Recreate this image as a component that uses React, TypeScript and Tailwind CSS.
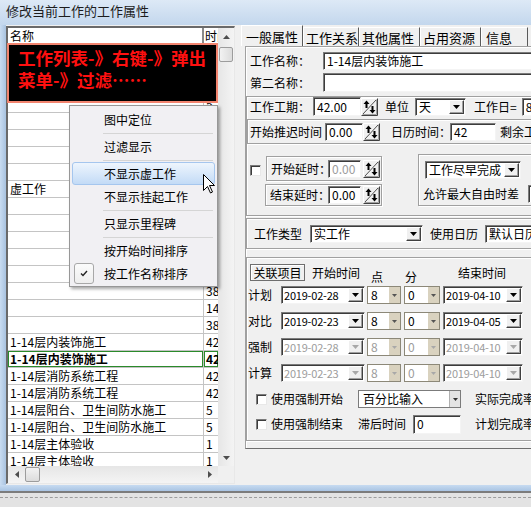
import React from "react";

type Kids = { children?: React.ReactNode; className?: string };

function L({ children, className = "" }: Kids) {
  return <span className={`shrink-0 whitespace-nowrap ${className}`}>{children}</span>;
}

function Field({ children, className = "", grey }: Kids & { grey?: boolean }) {
  return (
    <div
      className={`flex items-center shrink-0 bg-white border border-t-[#7b7b7b] border-l-[#7b7b7b] border-r-[#f4f4f4] border-b-[#f4f4f4] shadow-[inset_1px_1px_0_#3c3c3c] pl-[3px] text-[12px] leading-[14px] overflow-hidden whitespace-nowrap ${grey ? "text-[#9c9c9c]" : "text-black"} ${className}`}
    >
      {children}
    </div>
  );
}

function DropBtn({ grey }: { grey?: boolean }) {
  return (
    <div className="w-[15px] shrink-0 my-[1px] mr-[1px] flex items-center justify-center bg-[#f0f0f0] border border-t-white border-l-white border-r-[#404040] border-b-[#404040] shadow-[inset_-1px_-1px_0_#a0a0a0]">
      <svg width="7" height="4" viewBox="0 0 7 4">
        <path d="M0 0H7L3.5 4Z" fill={grey ? "#a8a8a8" : "#000"} />
      </svg>
    </div>
  );
}

function Combo({
  text,
  className = "",
  grey,
  small,
}: {
  text: string;
  className?: string;
  grey?: boolean;
  small?: boolean;
}) {
  return (
    <div
      className={`flex shrink-0 bg-white border border-t-[#7b7b7b] border-l-[#7b7b7b] border-r-[#f4f4f4] border-b-[#f4f4f4] shadow-[inset_1px_1px_0_#3c3c3c] ${className}`}
    >
      <div
        className={`flex-1 min-w-0 flex items-center whitespace-nowrap overflow-hidden ${small ? "pl-[2px] text-[11px] leading-[13px] tracking-[-0.2px]" : "pl-[3px] text-[12px] leading-[14px]"} ${grey ? "text-[#9c9c9c]" : "text-black"}`}
      >
        {text}
      </div>
      <DropBtn grey={grey} />
    </div>
  );
}

function TanCombo({ text, className = "", grey }: { text: string; className?: string; grey?: boolean }) {
  return (
    <div className={`flex h-[18px] shrink-0 bg-white border border-[#8c8878] ${className}`}>
      <div
        className={`flex-1 flex items-center pl-[3px] text-[12px] leading-[14px] ${grey ? "text-[#9c9c9c]" : "text-black"}`}
      >
        {text}
      </div>
      <div className="w-[11px] bg-[#d9d2bf] flex items-center justify-center">
        <svg width="5" height="3" viewBox="0 0 5 3">
          <path d="M0 0H5L2.5 3Z" fill={grey ? "#a8a8a8" : "#555"} />
        </svg>
      </div>
    </div>
  );
}

function Spin() {
  return (
    <svg width="17" height="18" viewBox="0 0 17 18" className="shrink-0">
      <rect x="0" y="0" width="17" height="18" fill="#f0f0f0" />
      <path d="M0.5 17.5V0.5H16.5" stroke="#fff" fill="none" />
      <path d="M0.5 17.5H16.5V0.5" stroke="#404040" fill="none" />
      <path d="M1.5 16.5H15.5V1.5" stroke="#a0a0a0" fill="none" />
      <path d="M2 16L15 2" stroke="#505050" />
      <path d="M5.5 4V10" stroke="#000" strokeWidth="2" />
      <path d="M2.5 6L5.5 2.5L8.5 6Z" fill="#000" />
      <path d="M11.5 8V13" stroke="#000" strokeWidth="2" />
      <path d="M8.5 12L11.5 15.5L14.5 12Z" fill="#000" />
    </svg>
  );
}

function Check({ className = "" }: { className?: string }) {
  return (
    <div
      className={`w-[11px] h-[11px] shrink-0 bg-white border border-t-[#7b7b7b] border-l-[#7b7b7b] border-r-[#e8e8e8] border-b-[#e8e8e8] shadow-[inset_1px_1px_0_#3c3c3c] ${className}`}
    />
  );
}

function Group({ children, className = "" }: Kids) {
  return (
    <div className={`shrink-0 border border-[#a0a0a0] shadow-[inset_1px_1px_0_#fff,1px_1px_0_#fff] ${className}`}>
      {children}
    </div>
  );
}

const rows: { name: string; time: string; bold?: boolean }[] = [
  { name: "", time: "42" },
  { name: "", time: "42" },
  { name: "", time: "5" },
  { name: "", time: "5" },
  { name: "", time: "" },
  { name: "", time: "" },
  { name: "", time: "" },
  { name: "", time: "" },
  { name: "虚工作", time: "" },
  { name: "", time: "" },
  { name: "", time: "" },
  { name: "", time: "" },
  { name: "", time: "" },
  { name: "", time: "" },
  { name: "", time: "38" },
  { name: "", time: "14" },
  { name: "", time: "38" },
  { name: "1-14层内装饰施工", time: "42" },
  { name: "1-14层内装饰施工", time: "42", bold: true },
  { name: "1-14层消防系统工程", time: "42" },
  { name: "1-14层消防系统工程", time: "42" },
  { name: "1-14层阳台、卫生间防水施工", time: "5" },
  { name: "1-14层阳台、卫生间防水施工", time: "5" },
  { name: "1-14层主体验收", time: "1" },
  { name: "1-14层主体验收", time: "1" },
];

function Arrow({ dir }: { dir: "up" | "down" | "left" | "right" }) {
  const d = {
    up: "M0 4L3.5 0L7 4Z",
    down: "M0 0H7L3.5 4Z",
    left: "M4 0V7L0 3.5Z",
    right: "M0 0V7L4 3.5Z",
  }[dir];
  const horiz = dir === "left" || dir === "right";
  return (
    <svg width={horiz ? 4 : 7} height={horiz ? 7 : 4} viewBox={horiz ? "0 0 4 7" : "0 0 7 4"}>
      <path d={d} fill="#4d4d4d" />
    </svg>
  );
}

function LeftList() {
  return (
    <div className="w-[229px] mt-[1px] h-[458px] shrink-0 flex flex-col bg-white border-l-2 border-t-2 border-r border-b border-l-[#6a6a6a] border-t-[#6a6a6a] border-r-[#e8e8e8] border-b-[#e8e8e8]">
      <div className="flex h-[438px]">
        <div className="w-[210px] overflow-hidden flex flex-col">
          <div className="flex h-[17px] shrink-0 border-b border-[#9a9a9a] text-[12px] leading-[16px]">
            <div className="w-[196px] shrink-0 border-r-2 border-[#8a8a8a] pl-[2px]">名称</div>
            <div className="flex-1 pl-[1px] overflow-hidden whitespace-nowrap">时间</div>
          </div>
          {rows.map((r, i) => (
            <div key={i} className="flex h-[17px] shrink-0 border-b border-[#c4c4c4] text-[12px] leading-[16px]">
              <div
                className={`w-[196px] shrink-0 border-r border-[#c4c4c4] pl-[2px] overflow-hidden whitespace-nowrap ${r.bold ? "font-bold shadow-[inset_0_0_0_1px_#2a8a2a]" : ""}`}
              >
                {r.name}
              </div>
              <div
                className={`flex-1 pl-[2px] overflow-hidden whitespace-nowrap ${r.bold ? "font-bold shadow-[inset_0_0_0_1px_#2a8a2a]" : ""}`}
              >
                {r.time}
              </div>
            </div>
          ))}
        </div>
        <div className="w-[16px] flex flex-col bg-gradient-to-r from-[#e6e6e6] to-[#f4f4f4]">
          <div className="h-[17px] flex items-center justify-center">
            <Arrow dir="up" />
          </div>
          <div className="h-[15px] mt-[2px] mx-[1px] rounded-[2px] border border-[#9c9c9c] bg-gradient-to-r from-[#f2f2f2] to-[#dcdcdc]" />
          <div className="flex-1" />
          <div className="h-[17px] flex items-center justify-center">
            <Arrow dir="down" />
          </div>
        </div>
      </div>
      <div className="flex h-[17px]">
        <div className="w-[210px] flex items-center bg-gradient-to-b from-[#e6e6e6] to-[#f4f4f4]">
          <div className="w-[17px] flex justify-center">
            <Arrow dir="left" />
          </div>
          <div className="w-[15px] h-[15px] rounded-[2px] border border-[#9c9c9c] bg-gradient-to-b from-[#f2f2f2] to-[#dcdcdc]" />
          <div className="flex-1" />
          <div className="w-[17px] flex justify-center">
            <Arrow dir="right" />
          </div>
        </div>
        <div className="flex-1 bg-[#f0f0f0]" />
      </div>
    </div>
  );
}

const tabs: [string, string][] = [
  ["一般属性", "w-[62px] pl-[4px]"],
  ["工作关系", "w-[56px] pl-[2px]"],
  ["其他属性", "w-[61px] pl-[2px]"],
  ["占用资源", "w-[61px] pl-[2px]"],
  ["信息", "w-[47px] pl-[4px]"],
];

function RightPanel() {
  return (
    <div className="w-[290px] shrink-0 flex flex-col whitespace-nowrap">
      <div className="flex h-[21px] items-end">
        {tabs.map(([t, w], i) => (
          <div
            key={t}
            className={`${w} shrink-0 flex items-center text-[13px] leading-[15px] border-l border-l-white border-t border-t-white border-r border-r-[#5a5a5a] ${i === 0 ? "h-[21px]" : "h-[19px]"}`}
          >
            {t}
          </div>
        ))}
      </div>
      <div className="ml-[4px] w-[300px] h-[403px] shrink-0 flex flex-col border-t border-l border-t-[#a0a0a0] border-l-[#a0a0a0] border-b border-b-[#6e6e6e] shadow-[inset_1px_1px_0_#fff] text-[12px] leading-[14px]">
        {/* names */}
        <div className="flex items-center mt-[5px] h-[18px]">
          <L className="w-[77px] pl-[4px]">工作名称：</L>
          <Field className="flex-1 h-[18px]">1-14层内装饰施工</Field>
        </div>
        <div className="flex items-center mt-[3px] h-[19px]">
          <L className="w-[77px] pl-[4px]">第二名称：</L>
          <Field className="flex-1 h-[19px]" />
        </div>

        {/* duration group */}
        <Group className="mt-[4px] h-[120px] flex flex-col">
          <div className="flex items-center h-[19px]">
            <L className="w-[66px] pl-[3px]">工作工期：</L>
            <Field className="w-[48px] h-[19px]">42.00</Field>
            <Spin />
            <L className="ml-[7px]">单位</L>
            <Combo text="天" className="ml-[6px] w-[51px] h-[18px]" />
            <L className="ml-[8px]">工作日=</L>
            <Field className="ml-[5px] w-[30px] h-[18px]">8</Field>
          </div>
          <Group className="mt-[3px] h-[25px] flex items-center">
            <L className="w-[77px] pl-[2px]">开始推迟时间</L>
            <Field className="w-[38px] h-[18px]">0.00</Field>
            <Spin />
            <L className="ml-[11px] w-[59px]">日历时间：</L>
            <Field className="w-[46px] h-[18px] text-[11px]">42</Field>
            <L className="ml-[4px]">剩余工作</L>
          </Group>
          <div className="flex items-start flex-1">
            <Check className="ml-[3px] mt-[21px]" />
            <div className="ml-[5px] mt-[12px] flex flex-col shrink-0">
              <Group className="w-[116px] h-[25px] flex items-center">
                <L className="w-[61px] pl-[4px]">开始延时：</L>
                <Field grey className="w-[33px] h-[18px]">0.00</Field>
                <span className="w-[2px] shrink-0" />
                <Spin />
              </Group>
              <Group className="mt-[3px] -ml-[1px] w-[117px] h-[22px] flex items-center">
                <L className="w-[62px] pl-[4px]">结束延时：</L>
                <Field className="w-[33px] h-[18px]">0.00</Field>
                <span className="w-[2px] shrink-0" />
                <Spin />
              </Group>
            </div>
            <Group className="ml-[36px] mt-[10px] h-[52px] w-[130px] flex flex-col">
              <Combo text="工作尽早完成" className="ml-[6px] mt-[6px] w-[96px] h-[18px]" />
              <div className="flex items-center mt-[6px]">
                <L className="ml-[4px]">允许最大自由时差</L>
                <Field className="ml-[9px] w-[30px] h-[18px]" />
              </div>
            </Group>
          </div>
        </Group>

        {/* type group */}
        <Group className="mt-[2px] h-[31px] flex items-center">
          <L className="w-[63px] pl-[7px]">工作类型</L>
          <Combo text="实工作" className="w-[113px] h-[18px]" />
          <L className="ml-[7px]">使用日历</L>
          <Combo text="默认日历" className="ml-[7px] w-[70px] h-[18px]" />
        </Group>

        {/* time group */}
        <Group className="mt-[8px] h-[184px] flex flex-col">
          <div className="flex items-start mt-[6px] h-[17px]">
            <div className="ml-[3px] w-[55px] h-[17px] shrink-0 flex items-center justify-center border border-[#6e6e6e] shadow-[inset_1px_1px_0_#fff]">
              关联项目
            </div>
            <L className="ml-[7px] mt-[2px]">开始时间</L>
            <L className="ml-[11px] mt-[6px]">点</L>
            <L className="ml-[22px] mt-[6px]">分</L>
            <L className="ml-[41px] mt-[2px]">结束时间</L>
          </div>
          {[
            ["计划", "2019-02-28", "2019-04-10", false, "mt-[5px]"],
            ["对比", "2019-02-23", "2019-04-05", false, "mt-[8px]"],
            ["强制", "2019-02-28", "2019-04-10", true, "mt-[8px]"],
            ["计算", "2019-02-23", "2019-04-10", true, "mt-[8px]"],
          ].map(([label, s, e, g, mt]) => (
            <div key={label as string} className={`flex items-center h-[18px] ${mt}`}>
              <L className="w-[34px] pl-[1px]">{label}</L>
              <Combo small text={s as string} grey={g as boolean} className="w-[84px] h-[18px]" />
              <TanCombo text="8" grey={g as boolean} className="ml-[2px] w-[34px]" />
              <TanCombo text="0" grey={g as boolean} className="ml-[3px] w-[36px]" />
              <Combo small text={e as string} grey={g as boolean} className="ml-[3px] w-[80px] h-[18px]" />
            </div>
          ))}
          <div className="flex items-center h-[18px] mt-[8px]">
            <Check className="ml-[9px]" />
            <L className="ml-[4px] w-[87px]">使用强制开始</L>
            <div className="flex w-[103px] h-[18px] shrink-0 bg-white border border-[#7b7b7b]">
              <div className="flex-1 flex items-center pl-[4px]">百分比输入</div>
              <div className="w-[11px] bg-[#e4e4e4] border-l border-[#b0b0b0] flex items-center justify-center">
                <svg width="5" height="3" viewBox="0 0 5 3">
                  <path d="M0 0H5L2.5 3Z" fill="#333" />
                </svg>
              </div>
            </div>
            <L className="ml-[14px]">实际完成率</L>
          </div>
          <div className="flex items-center h-[18px] mt-[7px]">
            <Check className="ml-[9px]" />
            <L className="ml-[4px] w-[87px]">使用强制结束</L>
            <L className="w-[55px]">滞后时间</L>
            <Field className="w-[48px] h-[19px]">0</Field>
            <L className="ml-[14px]">计划完成率</L>
          </div>
        </Group>
      </div>
    </div>
  );
}

function Menu() {
  const Sep = () => (
    <div className="h-[4px] flex items-center pl-[31px] pr-[2px]">
      <div className="h-[1px] w-full bg-[#d5d5d5]" />
    </div>
  );
  const Item = ({ t, hl, check }: { t: string; hl?: boolean; check?: boolean }) => (
    <div
      className={`relative h-[23px] flex items-center pl-[31px] border rounded-[3px] ${hl ? "bg-gradient-to-b from-[#eef5fd] to-[#c3dbf6] border-[#a5c6ee]" : "border-transparent"}`}
    >
      {check && (
        <div className="absolute left-[1px] top-[0px] w-[20px] h-[21px] rounded-[3px] border border-[#a8a8a8] bg-gradient-to-b from-[#fbfbfb] to-[#eeeeee] flex items-center justify-center">
          <svg width="8" height="7" viewBox="0 0 8 7">
            <path d="M1 3.5L3 5.5L7 1" stroke="#222" strokeWidth="1.4" fill="none" />
          </svg>
        </div>
      )}
      {t}
    </div>
  );
  return (
    <div className="absolute left-[69px] top-[105px] w-[149px] h-[182px] border border-[#979797] bg-[#f1f0f3] px-[2px] pt-[2px] text-[12px] leading-[14px] whitespace-nowrap shadow-[2px_2px_3px_rgba(0,0,0,0.35)]">
      <Item t="图中定位" />
      <Sep />
      <Item t="过滤显示" />
      <Sep />
      <Item t="不显示虚工作" hl />
      <Item t="不显示挂起工作" />
      <Sep />
      <Item t="只显示里程碑" />
      <Sep />
      <Item t="按开始时间排序" />
      <Item t="按工作名称排序" check />
    </div>
  );
}

export default function App() {
  return (
    <div className="w-[531px] h-[507px] overflow-hidden relative flex flex-col bg-[#f0f0f0] font-['Noto_Sans_CJK_SC','Noto_Sans',sans-serif] text-black select-none">
      <div className="h-[25px] shrink-0 bg-gradient-to-b from-[#dde9f6] to-[#c3d7ed] pl-[6px] pt-[3px] text-[13px] leading-[16px] text-[#1c1c1c]">
        修改当前工作的工作属性
      </div>
      <div className="flex h-[460px] shrink-0">
        <div className="w-[6px] shrink-0 bg-gradient-to-r from-[#c9dcf1] to-[#a9c3e0]" />
        <LeftList />
        <div className="w-[6px] shrink-0" />
        <RightPanel />
      </div>
      <div className="h-[6px] shrink-0 bg-gradient-to-b from-[#c7dbf1] to-[#a9c4e3]" />
      <div className="flex-1 bg-[#e3e3e3] border-t-2 border-[#7c7c7c] pt-[4px]">
        <div className="border-t border-dashed border-[#9c9c9c]" />
      </div>

      <div className="absolute left-[7px] top-[43px] w-[211px] h-[60px] border-2 border-[#f2846f] bg-black pl-[9px] pt-[2px] text-[17.5px] leading-[22px] font-bold text-[#ff1010] whitespace-nowrap">
        工作列表-》右键-》弹出
        <br />
        菜单-》过滤……
      </div>
      <Menu />
      <svg className="absolute left-[203px] top-[174px]" width="13" height="20" viewBox="0 0 13 20">
        <path d="M0.5 0.5V16.5L4.5 12.5L7.5 19L9.5 18L6.5 11.5H11.5Z" fill="#fff" stroke="#000" strokeLinejoin="round" />
      </svg>
    </div>
  );
}
